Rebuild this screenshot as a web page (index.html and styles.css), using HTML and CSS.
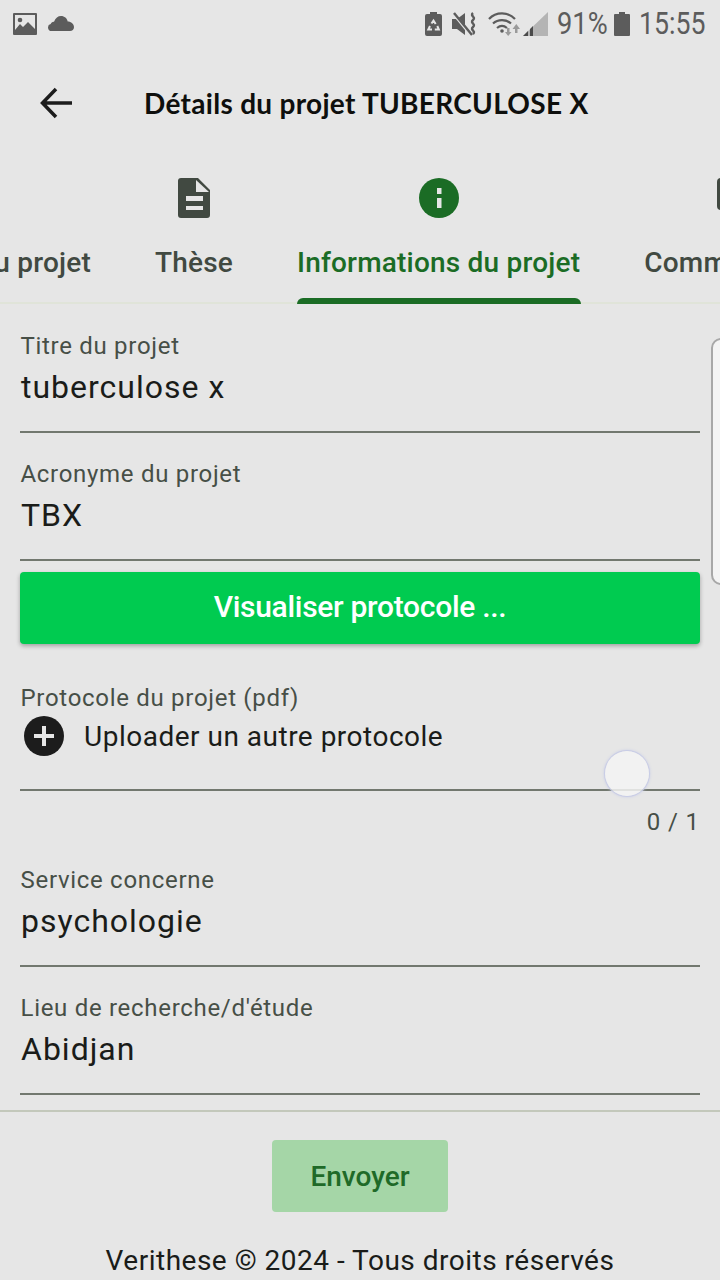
FILE: index.html
```html
<!DOCTYPE html>
<html lang="fr">
<head>
<meta charset="utf-8">
<title>Détails du projet</title>
<link rel="stylesheet" href="styles.css">
</head>
<body>
<div class="screen">
  <div class="status">
    <div class="status-left">
      <svg class="ic-img" viewBox="0 0 24 22"><path fill-rule="evenodd" fill="#5c5c5c" d="M1 0h22a1 1 0 0 1 1 1v20a1 1 0 0 1-1 1H1a1 1 0 0 1-1-1V1a1 1 0 0 1 1-1zM2 2v18h20V2z"/><path fill="#5c5c5c" d="M2 20v-3l5-6 3 3 5-5 7 7v4z"/><circle cx="7" cy="7" r="2.300" fill="#5c5c5c"/></svg>
      <svg class="ic-cloud" viewBox="0 0 26 15"><path fill="#5c5c5c" d="M3.500 15a3.500 3.500 0 0 1-.8-6.900C3 6.500 4.500 5.500 6 5.700 7.500 2 10 0 13 0c3.500 0 6 2.300 6.700 5.400 3.500 0 6.300 2.500 6.300 5.800 0 2.300-1.700 3.800-4 3.800z"/></svg>
    </div>
    <div class="status-right">
      <svg class="ic-recycle" viewBox="0 0 17 24"><path fill="#5c5c5c" d="M5 0h7v2h3a2 2 0 0 1 2 2v18a2 2 0 0 1-2 2H2a2 2 0 0 1-2-2V4a2 2 0 0 1 2-2h3z"/><path fill="none" stroke="#e6e6e6" stroke-width="2" d="M6.500 11.500l2-3 2.200 3.500M12.300 14l1.500 3.500h-4M7 17.500H3.300L5 14"/></svg>
      <svg class="ic-mute" viewBox="0 0 26 24"><path fill="#5c5c5c" d="M0 7h5l8-6v22l-8-6H0z"/><path fill="none" stroke="#e6e6e6" stroke-width="3" d="M0 0l19 23"/><path fill="none" stroke="#5c5c5c" stroke-width="2.400" d="M2 1l18 22"/><path fill="none" stroke="#5c5c5c" stroke-width="2.400" d="M21 1c-3.500 3 3.500 4 0 7s3.500 4 0 7 3.500 4 0 7"/></svg>
      <svg class="ic-wifi" viewBox="0 0 32 24"><path fill="none" stroke="#5c5c5c" stroke-width="2.200" d="M1 7c7-7.500 19-7.500 26 0M5 11.500c5-4.500 13-4.500 18 0M9 16c3-2.500 7-2.500 10 0"/><circle cx="14" cy="19" r="1.800" fill="#5c5c5c"/><path fill="#9a9a9a" d="M19 16h2.500v4h2l-3.300 4-3.200-4h2zM27 21h2.500v-4h2.500l-3.700-5-3.800 5h2.500z"/></svg>
      <svg class="ic-signal" viewBox="0 0 25 24"><path fill="#b4b4b4" d="M25 0v24H0z"/><path fill="#4a4a4a" d="M0 24l5-5v5zM7 24v-7l3-3v10z"/></svg>
      <span class="pct">91%</span>
      <svg class="ic-batt" viewBox="0 0 16 24"><path fill="#5c5c5c" d="M5 0h6v2h4a1 1 0 0 1 1 1v20a1 1 0 0 1-1 1H1a1 1 0 0 1-1-1V3a1 1 0 0 1 1-1h4z"/></svg>
      <span class="clock">15:55</span>
    </div>
  </div>

  <header class="appbar">
    <svg class="ic-back" viewBox="0 0 32 32"><path fill="none" stroke="#1c1c1c" stroke-width="3.500" d="M32 16H3M16 2L2.500 16 16 30"/></svg>
    <h1 class="title">Détails du projet TUBERCULOSE X</h1>
  </header>

  <nav class="tabs">
    <div class="track">
      <div class="tab">
        <span class="tab-icon"></span>
        <span class="tab-label">Résumé du projet</span>
      </div>
      <div class="tab">
        <svg class="tab-icon" viewBox="-4 0 40 40"><path fill-rule="evenodd" fill="#414941" d="M3 0h17l12 12v25a3 3 0 0 1-3 3H3a3 3 0 0 1-3-3V3a3 3 0 0 1 3-3zM8 18v5h17v-5zM8 28v4h17v-4z"/><path fill="#e6e6e6" d="M18 2v12h13z"/></svg>
        <span class="tab-label">Thèse</span>
      </div>
      <div class="tab tab-active">
        <svg class="tab-icon" viewBox="0 0 40 40"><circle cx="20" cy="20" r="20" fill="#1b6c25"/><path fill="#e6e6e6" d="M18 10h4.500v6H18zM18 20h4.500v10H18z"/></svg>
        <span class="tab-label">Informations du projet</span>
        <span class="indicator"></span>
      </div>
      <div class="tab">
        <svg class="tab-icon" viewBox="0 0 40 40"><path fill="#414941" d="M4 0h32a4 4 0 0 1 4 4v36l-8-8H4a4 4 0 0 1-4-4V4a4 4 0 0 1 4-4z"/></svg>
        <span class="tab-label">Commentaires</span>
      </div>
    </div>
  </nav>

  <main class="form">
    <div class="field">
      <label class="label">Titre du projet</label>
      <div class="value">tuberculose x</div>
    </div>
    <div class="field">
      <label class="label">Acronyme du projet</label>
      <div class="value">TBX</div>
    </div>
    <button class="btn-view">Visualiser protocole ...</button>
    <div class="field-upload">
      <label class="label">Protocole du projet (pdf)</label>
      <div class="upload">
        <svg class="ic-plus" viewBox="0 0 40 40"><circle cx="20" cy="20" r="20" fill="#1c1c1c"/><path fill="#e6e6e6" d="M18 10h4v8h8v4h-8v8h-4v-8h-8v-4h8z"/></svg>
        <span class="upload-text">Uploader un autre protocole</span>
      </div>
    </div>
    <div class="counter">0 / 1</div>
    <div class="field">
      <label class="label">Service concerne</label>
      <div class="value">psychologie</div>
    </div>
    <div class="field">
      <label class="label">Lieu de recherche/d'étude</label>
      <div class="value">Abidjan</div>
    </div>
  </main>

  <footer class="footer">
    <button class="btn-send">Envoyer</button>
    <p class="copy">Verithese © 2024 - Tous droits réservés</p>
  </footer>

  <div class="edge-handle"></div>
  <div class="touch-ball"></div>
</div>
</body>
</html>
```
FILE: styles.css
```css
* { box-sizing: border-box; }
html, body { margin: 0; padding: 0; }
body { background: #e6e6e6; font-family: Roboto, "Liberation Sans", sans-serif; }
.screen { position: relative; width: 720px; height: 1280px; overflow: hidden; background: #e6e6e6; display: flex; flex-direction: column; }

.status { height: 48px; flex: none; display: flex; justify-content: space-between; align-items: center; padding: 0 16px 0 13px; }
.status-left, .status-right { display: flex; align-items: center; }
.ic-img { width: 24px; height: 22px; }
.ic-cloud { width: 26px; height: 15px; margin-left: 11px; margin-top: -1px; }
.ic-recycle { width: 17px; height: 24px; }
.ic-mute { width: 26px; height: 24px; margin-left: 10px; }
.ic-wifi { width: 32px; height: 24px; margin-left: 10px; }
.ic-signal { width: 25px; height: 24px; margin-left: 3px; }
.pct { width: 48px; font-size: 31px; color: #5c5c5c; margin-left: 9px; line-height: 48px; transform: scaleX(.88); transform-origin: left center; white-space: nowrap; }
.ic-batt { width: 16px; height: 24px; margin-left: 9px; }
.clock { width: 65px; font-size: 31px; color: #5c5c5c; margin-left: 9px; line-height: 48px; transform: scaleX(.86); transform-origin: left center; white-space: nowrap; }

.appbar { height: 112px; flex: none; display: flex; align-items: center; padding: 0 0 0 40px; }
.ic-back { width: 32px; height: 32px; flex: none; margin-top: -3px; }
.title { margin: -2px 0 0 72px; font: 700 28px/1 Lato, sans-serif; color: #0e0f0d; white-space: nowrap; letter-spacing: 0.3px; }

.tabs { height: 144px; flex: none; overflow: hidden; box-shadow: inset 0 -2px 0 #e0e4d9; }
.track { display: flex; margin-left: -132px; height: 144px; width: 1200px; gap: 64px; }
.tab { position: relative; display: flex; flex-direction: column; align-items: center; height: 144px; padding-top: 18px; color: #414941; flex: none; }
.tab-icon { height: 40px; width: 40px; display: block; flex: none; }
.tab-label { margin-top: 25px; font-size: 28px; line-height: 40px; font-weight: 500; letter-spacing: 0.2px; white-space: nowrap; }
.tab-active { color: #1b6c25; }
.indicator { position: absolute; left: 0; right: -1px; bottom: 0; height: 6px; background: #1b6c25; border-radius: 6px 6px 0 0; }

.form { flex: 1; padding: 26px 20px 0; overflow: hidden; display: flex; flex-direction: column; }
.field { height: 103px; flex: none; border-bottom: 2px solid #72786f; padding-top: 2px; }
.field + .field { margin-top: 25px; }
.label { display: block; font-size: 24px; line-height: 28px; color: #474f47; letter-spacing: 0.7px; padding-left: 0.5px; font-weight: 400; }
.value { font-size: 32px; line-height: 48px; color: #1a1c19; letter-spacing: 1px; margin-top: 3px; padding-left: 1px; }
.btn-view { height: 72px; flex: none; margin-top: 11px; padding: 0 0 4px; border: 0; border-radius: 4px; background: #00cb50; color: #fff; font: 500 30px Roboto, sans-serif; letter-spacing: -0.3px; box-shadow: 0 2px 4px rgba(0,0,0,.3); }
.field-upload { height: 147px; flex: none; border-bottom: 2px solid #72786f; padding-top: 40px; }
.upload { display: flex; align-items: center; padding-left: 4px; margin-top: 4px; }
.ic-plus { width: 40px; height: 40px; flex: none; }
.upload-text { margin-left: 20px; font-size: 28px; letter-spacing: 0.5px; color: #1a1c19; }
.counter { height: 73px; flex: none; padding-top: 17px; text-align: right; font-size: 24px; line-height: 28px; color: #474f47; letter-spacing: 0.9px; }

.footer { flex: none; height: 170px; border-top: 2px solid #c3c8bb; display: flex; flex-direction: column; align-items: center; }
.btn-send { margin-top: 28px; width: 176px; height: 72px; border: 0; border-radius: 4px; background: #a5d6a7; color: #1f6a28; font: 500 28px Roboto, sans-serif; }
.copy { margin: 32px 0 0; font-size: 28px; line-height: 34px; color: #1a1c19; letter-spacing: 0.5px; white-space: nowrap; }

.edge-handle { position: absolute; left: 711px; top: 338px; width: 20px; height: 247px; background: #f4f4f4; border: 2px solid #a8a8a8; border-radius: 10px; }
.touch-ball { position: absolute; left: 605px; top: 751px; width: 44px; height: 45px; border-radius: 50%; background: rgba(243,243,243,.85); box-shadow: 0 0 0 1px #c9cde6, 0 0 3px 1px #c9cde6; }
```
